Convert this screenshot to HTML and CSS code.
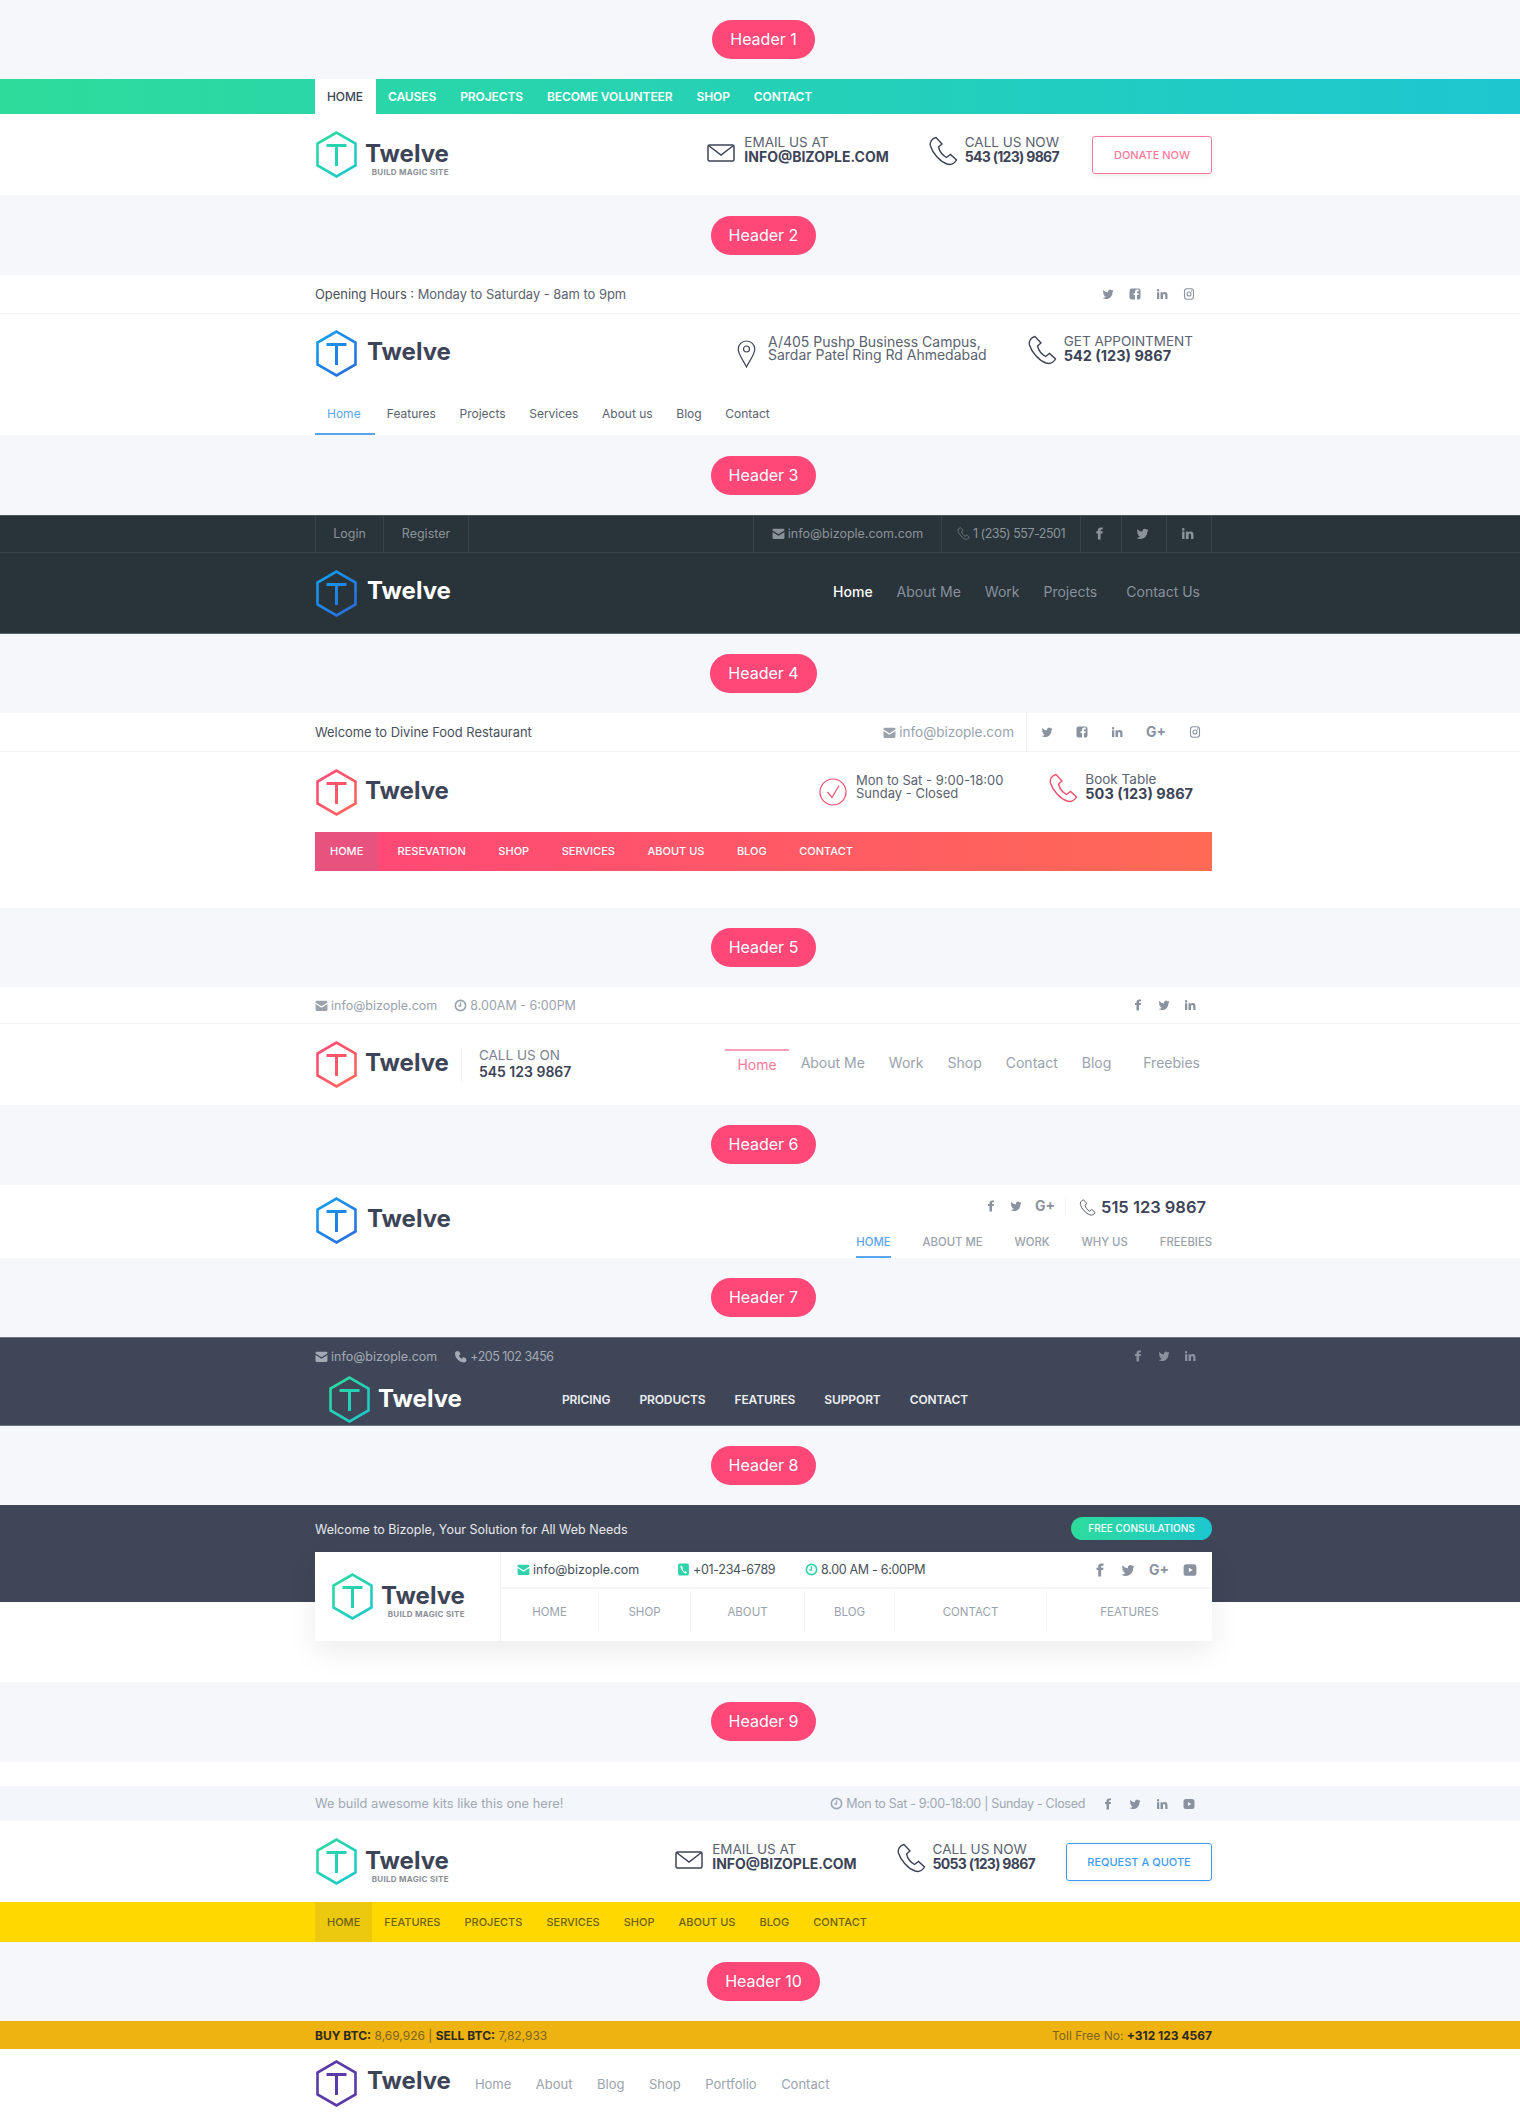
FILE: index.html
```html
<!DOCTYPE html>
<html>

<head>
    <title>Twelve - Headers</title>
    <link rel="stylesheet" href="styles.css">
</head>

<body>
    <svg class="defs" width="0" height="0">
        <defs>
            <linearGradient id="teal" gradientUnits="userSpaceOnUse" x1="0" y1="0" x2="43" y2="47">
                <stop offset="0" stop-color="#2edb9b" />
                <stop offset="1" stop-color="#1cc7d0" />
            </linearGradient>
            <linearGradient id="blue" gradientUnits="userSpaceOnUse" x1="0" y1="0" x2="43" y2="47">
                <stop offset="0" stop-color="#12a5ee" />
                <stop offset="1" stop-color="#2b66dc" />
            </linearGradient>
            <linearGradient id="red" gradientUnits="userSpaceOnUse" x1="0" y1="0" x2="43" y2="47">
                <stop offset="0" stop-color="#ff4778" />
                <stop offset="1" stop-color="#ff6a55" />
            </linearGradient>
            <symbol id="hex" viewBox="0 0 43 47">
                <path d="M21.5 1.6 40.5 12.5V34.500L21.500 45.400 2.500 34.500V12.500Z" fill="none" stroke-width="2.6" />
                <path d="M11.500 14.500H31.500M21.500 14.500V35" fill="none" stroke-width="3" />
            </symbol>
            <symbol id="i-tw" viewBox="0 0 24 24">
                <path d="M23 5.500a9 9 0 0 1-2.600.7 4.500 4.500 0 0 0 2-2.500 9 9 0 0 1-2.900 1.100 4.500 4.500 0 0 0-7.700 4.100A12.800 12.800 0 0 1 2.500 4.200a4.500 4.500 0 0 0 1.400 6 4.500 4.500 0 0 1-2-.6 4.500 4.500 0 0 0 3.600 4.500 4.500 4.500 0 0 1-2 .1 4.500 4.500 0 0 0 4.200 3.100A9 9 0 0 1 1 20.200a12.800 12.800 0 0 0 6.900 2c8.300 0 12.900-6.900 12.900-12.900v-.6A9 9 0 0 0 23 5.500z" />
            </symbol>
            <symbol id="i-f" viewBox="0 0 24 24">
                <path d="M14 8V6c0-1 .5-1.500 1.500-1.500H18V1h-3.500C11 1 9 3 9 6v2H6v4h3v11h5V12h3.500l.5-4z" />
            </symbol>
            <symbol id="i-fbs" viewBox="0 0 24 24">
                <path d="M5 1h14a4 4 0 0 1 4 4v14a4 4 0 0 1-4 4h-3v-9h3l.5-3.500H16V8c0-1 .5-1.500 1.500-1.500h2V3h-3C13.500 3 12 5 12 8v2.500H9V14h3v9H5a4 4 0 0 1-4-4V5a4 4 0 0 1 4-4z" />
            </symbol>
            <symbol id="i-in" viewBox="0 0 24 24">
                <path d="M2 8.500h4.500V22H2zM4.200 2a2.400 2.400 0 1 1 0 4.800 2.400 2.400 0 0 1 0-4.800zM9 8.500h4.300v1.900c.7-1.200 2.200-2.200 4.300-2.200 4.400 0 5.400 2.900 5.400 6.500V22h-4.500v-6.600c0-1.700-.4-3.300-2.300-3.300s-2.200 1.500-2.200 3.200V22H9z" />
            </symbol>
            <symbol id="i-ig" viewBox="0 0 24 24">
                <rect x="3" y="1.500" width="18" height="21" rx="5" fill="none" stroke="currentColor" stroke-width="2.200" />
                <circle cx="12" cy="12" r="4" fill="none" stroke="currentColor" stroke-width="2.200" />
                <circle cx="17" cy="6" r="1.300" />
            </symbol>
            <symbol id="i-yt" viewBox="0 0 24 24">
                <path fill-rule="evenodd" d="M6 2h12a5 5 0 0 1 5 5v10a5 5 0 0 1-5 5H6a5 5 0 0 1-5-5V7a5 5 0 0 1 5-5zm4 6v8l6.500-4z" />
            </symbol>
            <symbol id="i-mail" viewBox="0 0 24 24">
                <path d="M1 9l11 7 11-7v11a2 2 0 0 1-2 2H3a2 2 0 0 1-2-2zM3 3h18a2 2 0 0 1 2 2v1.500l-11 7-11-7V5a2 2 0 0 1 2-2z" />
            </symbol>
            <symbol id="i-clock" viewBox="0 0 24 24">
                <circle cx="12" cy="12" r="9.500" fill="none" stroke="currentColor" stroke-width="3" />
                <path d="M12 6v7h-4" fill="none" stroke="currentColor" stroke-width="2.500" />
            </symbol>
            <symbol id="i-phone" viewBox="0 0 24 24">
                <path d="M6 2l4 1 2 5-3 2c1 3 3 5 6 6l2-3 5 2 1 4c0 2-2 4-4 4C10 23 1 14 2 6c0-2 2-4 4-4z" />
            </symbol>
            <symbol id="i-phs" viewBox="0 0 24 24">
                <path fill-rule="evenodd" d="M5 1h14a3 3 0 0 1 3 3v16a3 3 0 0 1-3 3H5a3 3 0 0 1-3-3V4a3 3 0 0 1 3-3zm3 3.500c-1.500.5-2 2-1.500 4 1 4 4.500 8.500 8.500 10.500 1.500.5 3 0 3.500-1.500l-3-2.500-1.500 1c-2-1-3.500-3.500-4-5.500l1.500-1.500z" />
            </symbol>
            <symbol id="i-env" viewBox="0 0 28 18">
                <rect x="1" y="1" width="26" height="16" rx="1.500" fill="none" />
                <path d="M1.500 1.500 14 11 26.500 1.500" fill="none" />
            </symbol>
            <symbol id="i-call" viewBox="0 0 30 30">
                <path d="M8 1.500C4 2.500 1.500 6 2.500 10 4.500 17 12 25.500 19 28c4 1.200 7.500-.5 9.500-4l-6-5.500-4 3C15 19.500 11.500 15 10.500 11L14 8z" fill="none" />
            </symbol>
            <symbol id="i-pin" viewBox="0 0 19 28">
                <path d="M9.500 27C6 20 1.200 14 1.200 9.300a8.300 8.300 0 0 1 16.600 0C17.800 14 13 20 9.500 27z" fill="none" />
                <circle cx="9.500" cy="9" r="3" fill="none" />
            </symbol>
            <symbol id="i-check" viewBox="0 0 28 28">
                <circle cx="14" cy="14" r="13" fill="none" />
                <path d="M8.500 14l4.500 5.500L20 7.500" fill="none" />
            </symbol>
        </defs>
    </svg>

    <!-- header 1 -->
    <div class="band"><span class="pill">Header 1</span></div>
    <header class="h1">
        <div class="grad-bar">
            <nav class="wrap nav-caps">
                <a class="on">HOME</a><a>CAUSES</a><a>PROJECTS</a><a>BECOME VOLUNTEER</a><a>SHOP</a><a>CONTACT</a>
            </nav>
        </div>
        <div class="wrap main-row main-81">
            <div class="logo">
                <svg class="hex" stroke="url(#teal)"><use href="#hex" /></svg>
                <div class="logo-text"><b>Twelve</b><small>BUILD MAGIC SITE</small></div>
            </div>
            <div class="infos">
                <div class="info gap-39">
                    <svg class="i-env"><use href="#i-env" /></svg>
                    <p>EMAIL US AT<b>INFO@BIZOPLE.COM</b></p>
                </div>
                <div class="info gap-33">
                    <svg class="i-call"><use href="#i-call" /></svg>
                    <p>CALL US NOW<b class="num">543 (123) 9867</b></p>
                </div>
                <a class="btn btn-pink">DONATE NOW</a>
            </div>
        </div>
    </header>

    <!-- header 2 -->
    <div class="band low"><span class="pill">Header 2</span></div>
    <header class="h2">
        <div class="top-line">
            <div class="wrap top-row">
                <span class="txt-dark">Opening Hours : <span class="txt-mid">Monday to Saturday - 8am to 9pm</span></span>
                <div class="social soc-h2">
                    <svg><use href="#i-tw" /></svg>
                    <svg><use href="#i-fbs" /></svg>
                    <svg><use href="#i-in" /></svg>
                    <svg><use href="#i-ig" /></svg>
                </div>
            </div>
        </div>
        <div class="wrap main-row main-h2">
            <div class="logo">
                <svg class="hex" stroke="url(#blue)"><use href="#hex" /></svg>
                <div class="logo-text plain"><b>Twelve</b></div>
            </div>
            <div class="infos pad-r">
                <div class="info gap-40">
                    <svg class="i-pin"><use href="#i-pin" /></svg>
                    <p class="addr addr-lg">A/405 Pushp Business Campus,<br>Sardar Patel Ring Rd Ahmedabad</p>
                </div>
                <div class="info">
                    <svg class="i-call"><use href="#i-call" /></svg>
                    <p>GET APPOINTMENT<b class="num-lg">542 (123) 9867</b></p>
                </div>
            </div>
        </div>
        <nav class="wrap nav-line">
            <a class="on">Home</a><a>Features</a><a>Projects</a><a>Services</a><a>About us</a><a>Blog</a><a>Contact</a>
        </nav>
    </header>

    <!-- header 3 -->
    <div class="band low"><span class="pill">Header 3</span></div>
    <header class="h3">
        <div class="h3-top">
            <div class="wrap h3-top-row">
                <div class="cells">
                    <a class="cell cell-login">Login</a>
                    <a class="cell cell-reg">Register</a>
                </div>
                <div class="cells">
                    <a class="cell cell-mail"><svg class="ic"><use href="#i-mail" /></svg>info@bizople.com.com</a>
                    <a class="cell cell-tel"><svg class="ic"><use href="#i-call" /></svg>1 (235) 557-2501</a>
                    <a class="cell cell-f"><svg class="ic"><use href="#i-f" /></svg></a>
                    <a class="cell cell-t"><svg class="ic"><use href="#i-tw" /></svg></a>
                    <a class="cell cell-i"><svg class="ic"><use href="#i-in" /></svg></a>
                </div>
            </div>
        </div>
        <div class="wrap main-row main-h3">
            <div class="logo">
                <svg class="hex" stroke="url(#blue)"><use href="#hex" /></svg>
                <div class="logo-text plain white"><b>Twelve</b></div>
            </div>
            <nav class="nav-h3">
                <a class="on">Home</a><a>About Me</a><a>Work</a><a>Projects</a><a class="far">Contact Us</a>
            </nav>
        </div>
    </header>

    <!-- header 4 -->
    <div class="band"><span class="pill">Header 4</span></div>
    <header class="h4">
        <div class="top-line">
            <div class="wrap top-row">
                <span class="txt-dark">Welcome to Divine Food Restaurant</span>
                <div class="h4-right">
                    <span class="mail-txt"><svg class="ic"><use href="#i-mail" /></svg>info@bizople.com</span>
                    <div class="social soc-h4">
                        <svg><use href="#i-tw" /></svg>
                        <svg><use href="#i-fbs" /></svg>
                        <svg><use href="#i-in" /></svg>
                        <span class="gplus">G+</span>
                        <svg><use href="#i-ig" /></svg>
                    </div>
                </div>
            </div>
        </div>
        <div class="wrap main-row main-h4">
            <div class="logo">
                <svg class="hex" stroke="url(#red)"><use href="#hex" /></svg>
                <div class="logo-text plain"><b>Twelve</b></div>
            </div>
            <div class="infos pad-r reds">
                <div class="info gap-45">
                    <svg class="i-check"><use href="#i-check" /></svg>
                    <p class="addr">Mon to Sat - 9:00-18:00<br>Sunday - Closed</p>
                </div>
                <div class="info">
                    <svg class="i-call"><use href="#i-call" /></svg>
                    <p>Book Table<b class="num-lg">503 (123) 9867</b></p>
                </div>
            </div>
        </div>
        <nav class="wrap nav-red">
            <a class="on">HOME</a><a>RESEVATION</a><a>SHOP</a><a>SERVICES</a><a>ABOUT US</a><a>BLOG</a><a>CONTACT</a>
        </nav>
    </header>

    <!-- header 5 -->
    <div class="band"><span class="pill">Header 5</span></div>
    <header class="h5">
        <div class="top-line">
            <div class="wrap top-row row-36">
                <div class="tiny-list">
                    <span><svg class="ic"><use href="#i-mail" /></svg>info@bizople.com</span>
                    <span><svg class="ic"><use href="#i-clock" /></svg>8.00AM - 6:00PM</span>
                </div>
                <div class="social soc-h5">
                    <svg><use href="#i-f" /></svg>
                    <svg><use href="#i-tw" /></svg>
                    <svg><use href="#i-in" /></svg>
                </div>
            </div>
        </div>
        <div class="wrap main-row main-81">
            <div class="h5-left">
                <div class="logo">
                    <svg class="hex" stroke="url(#red)"><use href="#hex" /></svg>
                    <div class="logo-text plain"><b>Twelve</b></div>
                </div>
                <p class="call-on">CALL US ON<b>545 123 9867</b></p>
            </div>
            <nav class="nav-h5">
                <a class="on">Home</a><a>About Me</a><a>Work</a><a>Shop</a><a>Contact</a><a>Blog</a><a class="far">Freebies</a>
            </nav>
        </div>
    </header>

    <!-- header 6 -->
    <div class="band tall"><span class="pill">Header 6</span></div>
    <header class="h6">
        <div class="wrap h6-row">
            <div class="logo h6-logo">
                <svg class="hex" stroke="url(#blue)"><use href="#hex" /></svg>
                <div class="logo-text plain"><b>Twelve</b></div>
            </div>
            <div class="h6-right">
                <div class="h6-up">
                    <div class="social soc-h6">
                        <svg><use href="#i-f" /></svg>
                        <svg><use href="#i-tw" /></svg>
                        <span class="gplus">G+</span>
                    </div>
                    <div class="h6-phone">
                        <svg class="i-call"><use href="#i-call" /></svg>
                        <b>515 123 9867</b>
                    </div>
                </div>
                <nav class="nav-h6">
                    <a class="on">HOME</a><a>ABOUT ME</a><a>WORK</a><a>WHY US</a><a>FREEBIES</a>
                </nav>
            </div>
        </div>
    </header>

    <!-- header 7 -->
    <div class="band"><span class="pill">Header 7</span></div>
    <header class="h7">
        <div class="wrap top-row row-36">
            <div class="tiny-list">
                <span><svg class="ic"><use href="#i-mail" /></svg>info@bizople.com</span>
                <span class="tighter"><svg class="ic"><use href="#i-phone" /></svg>+205 102 3456</span>
            </div>
            <div class="social soc-h5">
                <svg><use href="#i-f" /></svg>
                <svg><use href="#i-tw" /></svg>
                <svg><use href="#i-in" /></svg>
            </div>
        </div>
        <div class="wrap h7-row">
            <div class="logo">
                <svg class="hex" stroke="url(#teal)"><use href="#hex" /></svg>
                <div class="logo-text plain white"><b>Twelve</b></div>
            </div>
            <nav class="nav-h7">
                <a>PRICING</a><a>PRODUCTS</a><a>FEATURES</a><a>SUPPORT</a><a>CONTACT</a>
            </nav>
        </div>
    </header>

    <!-- header 8 -->
    <div class="band"><span class="pill">Header 8</span></div>
    <header class="h8">
        <div class="wrap h8-top">
            <span class="h8-hello">Welcome to Bizople, Your Solution for All Web Needs</span>
            <a class="btn-free">FREE CONSULATIONS</a>
        </div>
        <div class="wrap h8-card">
            <div class="h8-logo">
                <div class="logo">
                    <svg class="hex" stroke="url(#teal)"><use href="#hex" /></svg>
                    <div class="logo-text"><b>Twelve</b><small>BUILD MAGIC SITE</small></div>
                </div>
            </div>
            <div class="h8-body">
                <div class="h8-info">
                    <div class="h8-list">
                        <span><svg class="ic"><use href="#i-mail" /></svg>info@bizople.com</span>
                        <span class="tight"><svg class="ic"><use href="#i-phs" /></svg>+01-234-6789</span>
                        <span class="tight"><svg class="ic"><use href="#i-clock" /></svg>8.00 AM - 6:00PM</span>
                    </div>
                    <div class="social soc-h8">
                        <svg><use href="#i-f" /></svg>
                        <svg><use href="#i-tw" /></svg>
                        <span class="gplus">G+</span>
                        <svg><use href="#i-yt" /></svg>
                    </div>
                </div>
                <nav class="nav-h8">
                    <a>HOME</a><a>SHOP</a><a>ABOUT</a><a>BLOG</a><a>CONTACT</a><a>FEATURES</a>
                </nav>
            </div>
        </div>
    </header>

    <!-- header 9 -->
    <div class="band tall"><span class="pill">Header 9</span></div>
    <header class="h9">
        <div class="h9-top">
            <div class="wrap top-row row-35">
                <span>We build awesome kits like this one here!</span>
                <div class="h9-right">
                    <span class="tight"><svg class="ic"><use href="#i-clock" /></svg>Mon to Sat - 9:00-18:00 | Sunday - Closed</span>
                    <div class="social soc-h9">
                        <svg><use href="#i-f" /></svg>
                        <svg><use href="#i-tw" /></svg>
                        <svg><use href="#i-in" /></svg>
                        <svg><use href="#i-yt" /></svg>
                    </div>
                </div>
            </div>
        </div>
        <div class="wrap main-row main-81">
            <div class="logo">
                <svg class="hex" stroke="url(#teal)"><use href="#hex" /></svg>
                <div class="logo-text"><b>Twelve</b><small>BUILD MAGIC SITE</small></div>
            </div>
            <div class="infos">
                <div class="info gap-39">
                    <svg class="i-env"><use href="#i-env" /></svg>
                    <p>EMAIL US AT<b>INFO@BIZOPLE.COM</b></p>
                </div>
                <div class="info gap-31">
                    <svg class="i-call"><use href="#i-call" /></svg>
                    <p>CALL US NOW<b class="num">5053 (123) 9867</b></p>
                </div>
                <a class="btn btn-blue">REQUEST A QUOTE</a>
            </div>
        </div>
        <div class="yellow">
            <nav class="wrap nav-yellow">
                <a class="on">HOME</a><a>FEATURES</a><a>PROJECTS</a><a>SERVICES</a><a>SHOP</a><a>ABOUT US</a><a>BLOG</a><a>CONTACT</a>
            </nav>
        </div>
    </header>

    <!-- header 10 -->
    <div class="band"><span class="pill">Header 10</span></div>
    <header class="h10">
        <div class="gold">
            <div class="wrap gold-row">
                <span><b>BUY BTC:</b> 8,69,926 | <b>SELL BTC:</b> 7,82,933</span>
                <span>Toll Free No: <b>+312 123 4567</b></span>
            </div>
        </div>
        <div class="wrap h10-row">
            <div class="logo">
                <svg class="hex" stroke="#5a3aa5"><use href="#hex" /></svg>
                <div class="logo-text plain"><b>Twelve</b></div>
            </div>
            <nav class="nav-h10">
                <a>Home</a><a>About</a><a>Blog</a><a>Shop</a><a>Portfolio</a><a>Contact</a>
            </nav>
        </div>
    </header>
</body>

</html>
```

FILE: styles.css
```css
* {
    box-sizing: border-box;
}

html,
body {
    margin: 0;
    padding: 0;
}

body {
    background: #fff;
    font-family: Inter, "Open Sans", sans-serif;
    font-size: 12px;
    color: #3d4457;
    overflow-x: hidden;
}

p {
    margin: 0;
}

.defs {
    position: absolute;
}

.wrap {
    width: 897px;
    margin-left: 315px;
}

/* pink label between the headers */
.band {
    background: #f5f7fb;
    height: 79px;
    padding: 20px 0 0 7px;
    text-align: center;
}

.band.tall {
    height: 80px;
}

.band.low {
    height: 80px;
    padding-top: 21px;
}

.pill {
    display: inline-block;
    height: 39px;
    line-height: 39px;
    padding: 0 18px;
    border-radius: 20px;
    background: #ff4778;
    color: #fff;
    font-size: 16px;
}

/* logo */
.logo {
    display: flex;
    align-items: center;
    flex: none;
}

.hex {
    width: 43px;
    height: 47px;
    flex: none;
}

.logo-text {
    margin-left: 7px;
    display: flex;
    flex-direction: column;
    align-items: flex-end;
    padding-top: 10px;
}

.logo-text b {
    font-size: 24px;
    line-height: 24px;
    font-weight: 700;
    color: #3d4457;
}

.logo-text small {
    font-size: 8px;
    line-height: 10px;
    font-weight: 700;
    color: #8b8f99;
    margin-top: 1px;
    letter-spacing: .3px;
}

.logo-text.plain {
    margin-left: 9px;
    padding: 0 0 4px;
}

.h4 .logo-text.plain {
    margin-left: 7px;
    padding-bottom: 2px;
}

.h5 .logo-text.plain {
    margin-left: 7px;
}

.h3 .logo-text.plain,
.h10 .logo-text.plain {
    padding-bottom: 6px;
}

.h7 .logo-text.plain {
    margin-left: 7px;
    padding-bottom: 2px;
}

.logo-text.white b {
    color: #fff;
}

/* info blocks */
.main-row {
    display: flex;
    align-items: center;
    justify-content: space-between;
}

.main-81 {
    height: 81px;
}

.infos {
    display: flex;
    align-items: center;
}

.pad-r {
    padding-right: 19px;
}

.info {
    display: flex;
    align-items: center;
    gap: 9px;
}

.info p {
    font-size: 13.500px;
    line-height: 14px;
    color: #5b6270;
    margin-bottom: 11px;
}

.info p b {
    display: block;
    font-size: 14px;
    font-weight: 700;
    line-height: 15px;
    color: #3d4457;
}

.info p b.num {
    letter-spacing: -.7px;
}

.info p b.num-lg {
    font-size: 14.500px;
}

.gap-31 {
    margin-right: 31px;
}

.gap-33 {
    margin-right: 33px;
}

.gap-39 {
    margin-right: 39px;
}

.gap-40 {
    margin-right: 40px;
}

.gap-45 {
    margin-right: 45px;
}

.i-env {
    width: 28px;
    height: 18px;
    stroke: #3d4457;
    stroke-width: 1.500;
    margin-bottom: 3px;
    flex: none;
}

.i-call {
    width: 30px;
    height: 30px;
    stroke: #3d4457;
    stroke-width: 1.400;
    margin: 0 -2px 8px 0;
    flex: none;
}

.i-pin {
    width: 19px;
    height: 28px;
    stroke: #3d4457;
    stroke-width: 1.200;
    margin-right: 3px;
    flex: none;
}

.i-check {
    width: 28px;
    height: 28px;
    stroke: #f0506e;
    stroke-width: 1.200;
    flex: none;
}

.reds .i-call {
    stroke: #f0506e;
}

.info p.addr {
    font-size: 13px;
    line-height: 13px;
}

.info p.addr-lg {
    font-size: 14px;
}

.btn {
    display: block;
    height: 38px;
    line-height: 36px;
    text-align: center;
    font-size: 11px;
    font-weight: 500;
    border-radius: 3px;
    box-shadow: 0 2px 6px rgba(0, 0, 0, .08);
}

.btn-pink {
    width: 120px;
    color: #ff7a9b;
    border: 1px solid #ff7a9b;
}

.btn-blue {
    width: 146px;
    color: #3e9bf0;
    border: 1px solid #3e9bf0;
}

/* small icons and socials */
.ic {
    width: 13px;
    height: 13px;
    fill: currentColor;
    vertical-align: -2px;
    margin-right: 3px;
    stroke: currentColor;
    stroke-width: 0;
}

.tight {
    letter-spacing: -.3px;
}

.tighter {
    letter-spacing: -.5px;
}

.social {
    display: flex;
    align-items: center;
    color: #8a92a0;
}

.social svg {
    width: 12px;
    height: 12px;
    fill: currentColor;
}

.gplus {
    font-size: 14px;
    font-weight: 700;
    line-height: 14px;
}

.top-line {
    border-bottom: 1px solid #f0f1f3;
}

.top-row {
    height: 38px;
    display: flex;
    align-items: center;
    justify-content: space-between;
}

.row-36 {
    height: 36px;
}

.row-35 {
    height: 35px;
}

.txt-dark {
    color: #4a505c;
    font-size: 12.900px;
}

.txt-mid {
    color: #5b6270;
}

/* header 1 */
.grad-bar {
    background: linear-gradient(to right, #2edb9b, #1cc7d0);
}

.nav-caps {
    height: 35px;
    display: flex;
}

.nav-caps a {
    padding: 0 12px;
    line-height: 35px;
    font-size: 12px;
    font-weight: 600;
    letter-spacing: -.1px;
    color: #fff;
}

.nav-caps a.on {
    min-width: 61px;
    background: #fff;
    color: #3d4457;
    font-weight: 500;
}

/* header 2 */
.soc-h2 {
    gap: 15px;
    padding-right: 17px;
}

.main-h2 {
    height: 79px;
}

.nav-line {
    height: 42px;
    display: flex;
}

.nav-line a {
    padding: 0 11.800px;
    line-height: 42px;
    color: #5b6270;
}

.nav-line a.on {
    min-width: 60px;
    padding: 0 12px;
    color: #5aa5f0;
    border-bottom: 2px solid #5aa5f0;
}

/* header 3 */
.h3 {
    background: #29333a;
    border-top: 1px solid #4d555c;
    border-bottom: 1px solid #5d6469;
    height: 119px;
}

.h3-top {
    border-bottom: 1px solid #37424a;
}

.h3-top-row {
    height: 36px;
    display: flex;
    justify-content: space-between;
}

.cells {
    display: flex;
    border-left: 1px solid #37424a;
}

.cell {
    display: flex;
    align-items: center;
    justify-content: center;
    height: 36px;
    padding-bottom: 1px;
    border-right: 1px solid #37424a;
    color: #8a9399;
    font-size: 12.500px;
}

.cell-login {
    width: 68px;
}

.cell-reg {
    width: 85px;
}

.cell-mail {
    width: 188px;
}

.cell-tel {
    width: 139px;
    letter-spacing: -.5px;
}

.cell-tel .ic {
    stroke: currentColor;
    stroke-width: 1.500;
    fill: none;
}

.cell-f {
    width: 41px;
}

.cell-t,
.cell-i {
    width: 45px;
}

.main-h3 {
    height: 81px;
}

.nav-h3 {
    display: flex;
    gap: 24px;
    padding: 0 12px 5px 0;
    font-size: 14px;
    color: #87919a;
}

.nav-h3 a.on {
    color: #fff;
    font-weight: 500;
}

.nav-h3 .far {
    margin-left: 5px;
}

/* header 4 */
.h4 {
    padding-bottom: 37px;
}

.h4-right {
    display: flex;
    align-items: center;
    height: 38px;
}

.mail-txt {
    color: #9aa2ad;
    font-size: 13.500px;
    padding-right: 12px;
    border-right: 1px solid #f0f1f3;
    height: 38px;
    line-height: 38px;
}

.soc-h4 {
    gap: 23px;
    padding: 0 11px 0 14px;
}

.main-h4 {
    height: 80px;
}

.nav-red {
    height: 39px;
    display: flex;
    background: linear-gradient(to right, #ff4778, #ff6a55);
}

.nav-red a {
    padding: 0 16.250px;
    line-height: 39px;
    font-size: 11px;
    font-weight: 500;
    color: #fff;
}

.nav-red a.on {
    padding: 0 15px;
    margin-right: 3px;
    background: #e8527f;
}

/* header 5 */
.tiny-list {
    display: flex;
    gap: 17px;
    font-size: 12.500px;
    color: #9aa2ad;
}

.soc-h5 {
    gap: 14px;
    padding-right: 16px;
}

.h5-left {
    display: flex;
    align-items: center;
}

.call-on {
    margin-left: 12px;
    padding: 0 0 2px 17px;
    border-left: 1px solid #f0f1f3;
    font-size: 13.500px;
    line-height: 15px;
    color: #7b8290;
}

.call-on b {
    display: block;
    font-size: 14px;
    font-weight: 600;
    line-height: 17px;
    color: #3d4457;
}

.nav-h5 {
    display: flex;
    align-self: stretch;
    padding: 25px 12px 0 0;
    font-size: 14px;
    color: #9aa2ad;
}

.nav-h5 a {
    margin-left: 24px;
    height: 30px;
    line-height: 28px;
}

.nav-h5 a.on {
    color: #ff7a9b;
    border-top: 2px solid #ffa0b8;
    padding: 0 12px;
    margin-left: 0;
    margin-right: -12px;
}

.nav-h5 .far {
    margin-left: 32px;
}

/* header 6 */
.h6-row {
    height: 73px;
    display: flex;
    justify-content: space-between;
}

.h6-logo {
    height: 73px;
    padding-bottom: 2px;
}

.h6-right {
    display: flex;
    flex-direction: column;
    align-items: flex-end;
    justify-content: space-between;
}

.h6-up {
    display: flex;
    align-items: center;
    height: 44px;
}

.soc-h6 {
    gap: 13px;
    padding: 0 10px 2px 0;
    height: 20px;
    border-right: 1px solid #f0f1f3;
}

.h6-phone {
    display: flex;
    align-items: center;
    gap: 5px;
    padding-left: 13px;
    padding-right: 6px;
}

.h6-phone .i-call {
    width: 17px;
    height: 17px;
    margin: 0;
    stroke-width: 1.500;
}

.h6-phone b {
    font-size: 16.500px;
    font-weight: 600;
}

.nav-h6 {
    display: flex;
    gap: 32px;
    font-size: 11.300px;
    font-weight: 500;
    color: #9aa2ad;
}

.nav-h6 a {
    height: 29px;
    line-height: 26px;
}

.nav-h6 a.on {
    color: #5aa5f0;
    border-bottom: 2px solid #5aa5f0;
}

/* header 7 */
.h7 {
    background: #3f4657;
    border-top: 1px solid #6f7581;
    border-bottom: 1px solid #6f7581;
    height: 89px;
}

.h7 .tiny-list {
    color: #a3aab6;
}

.h7-row {
    display: flex;
    align-items: center;
    height: 51px;
    padding-left: 13px;
}

.nav-h7 {
    display: flex;
    gap: 29px;
    margin-left: 100px;
    font-weight: 600;
    letter-spacing: -.1px;
    color: #eceef2;
}

/* header 8 */
.h8 {
    background: linear-gradient(#3f4657 97px, #fff 97px);
    height: 177px;
}

.h8-top {
    height: 47px;
    display: flex;
    align-items: center;
    justify-content: space-between;
    color: #e6e8ec;
    font-size: 12.500px;
}

.h8-hello {
    padding-top: 2px;
}

.btn-free {
    width: 141px;
    height: 23px;
    line-height: 22px;
    text-align: center;
    border-radius: 12px;
    background: linear-gradient(to right, #2edb9b, #1cc7d0);
    color: #fff;
    font-size: 10px;
    font-weight: 500;
}

.h8-card {
    height: 89px;
    display: flex;
    background: #fff;
    box-shadow: 0 10px 30px rgba(0, 0, 0, .08);
}

.h8-logo {
    width: 186px;
    border-right: 1px solid #f0f1f3;
    padding-left: 16px;
    display: flex;
    align-items: center;
    flex: none;
}

.h8-body {
    flex: 1;
}

.h8-info {
    height: 37px;
    border-bottom: 2px solid #f5f6f8;
    display: flex;
    align-items: center;
    justify-content: space-between;
    padding: 0 15px 0 16px;
}

.h8-list {
    font-size: 12.500px;
    display: flex;
    color: #4a505c;
}

.h8-list span {
    width: 160px;
}

.h8-list span:nth-child(2) {
    width: 128px;
}

.h8-list .ic {
    color: #2ed3aa;
}

.soc-h8 {
    gap: 14px;
}

.soc-h8 svg {
    width: 14px;
    height: 14px;
}

.nav-h8 {
    display: grid;
    grid-template-columns: 98px 92px 114px 90px 152px 165px;
    height: 42px;
    margin-top: 2px;
    font-size: 11.500px;
    color: #9aa2ad;
    text-align: center;
}

.nav-h8 a {
    line-height: 42px;
    border-right: 1px solid #f3f4f6;
}

.nav-h8 a:last-child {
    border-right: 0;
}

/* header 9 */
.h9-top {
    margin-top: 24px;
    background: #f3f6fa;
    color: #a0a8b4;
    font-size: 12.800px;
}

.h9-right {
    display: flex;
    align-items: center;
    gap: 17px;
    font-size: 12.500px;
}

.soc-h9 {
    gap: 15px;
    padding-right: 17px;
}

.yellow {
    background: #ffd800;
}

.nav-yellow {
    height: 40px;
    display: flex;
}

.nav-yellow a {
    padding: 0 12px;
    line-height: 40px;
    font-size: 11px;
    font-weight: 500;
    color: #6e6210;
}

.nav-yellow a.on {
    background: #ecc90f;
}

/* header 10 */
.gold {
    background: #eeb311;
}

.gold-row {
    height: 28px;
    display: flex;
    align-items: center;
    justify-content: space-between;
    color: #7d6420;
    font-size: 12px;
}

.gold-row b {
    color: #2e2a1e;
    font-weight: 700;
}

.h10-row {
    height: 69px;
    display: flex;
    align-items: center;
}

.h10 {
    border-bottom: 1px solid #aaa;
}

.nav-h10 {
    display: flex;
    gap: 24.500px;
    margin-left: 24px;
    font-size: 13px;
    color: #9aa2ad;
}
```
